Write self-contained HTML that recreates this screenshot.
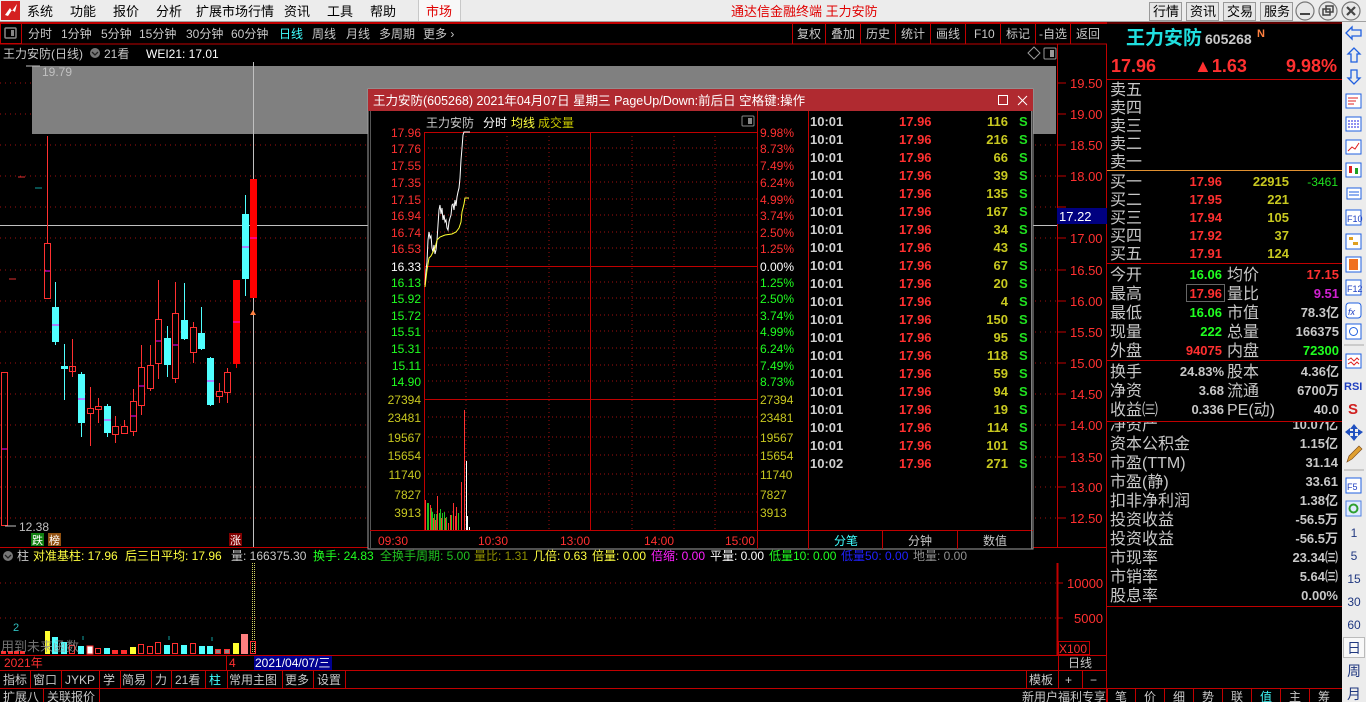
<!DOCTYPE html>
<html><head><meta charset="utf-8">
<style>
html,body{margin:0;padding:0;background:#000;width:1366px;height:702px;overflow:hidden}
svg{display:block}
text{font-family:"Liberation Sans","Noto Sans CJK SC",sans-serif;}
</style></head><body>
<svg width="1366" height="702" viewBox="0 0 1366 702" xmlns="http://www.w3.org/2000/svg">
<rect width="1366" height="702" fill="#000"/>
<!-- top menu -->
<rect x="0" y="0" width="1366" height="22" fill="#ececec"/>
<line x1="0" y1="21.5" x2="1366" y2="21.5" stroke="#a0a0a0"/>
<rect x="1" y="1" width="19" height="19" fill="#d42020"/>
<path d="M5 15 L10 8 L12 11 L17 4 L15 12 L12 10 L8 16Z" fill="#fff"/>
<g font-size="13" fill="#000">
<text x="27" y="16">系统</text><text x="70" y="16">功能</text><text x="113" y="16">报价</text><text x="156" y="16">分析</text><text x="196" y="16">扩展市场行情</text><text x="284" y="16">资讯</text><text x="327" y="16">工具</text><text x="370" y="16">帮助</text>
</g>
<rect x="418" y="0" width="42" height="21" fill="#f8f8f8"/>
<line x1="418.5" y1="0" x2="418.5" y2="21" stroke="#c8c8c8"/>
<line x1="460.5" y1="0" x2="460.5" y2="21" stroke="#c8c8c8"/>
<text x="426" y="16" font-size="13" fill="#e00000">市场</text>
<text x="731" y="16" font-size="13" fill="#e00000">通达信金融终端  王力安防</text>
<g font-size="13" fill="#000">
<rect x="1149.5" y="2.5" width="32" height="18" fill="#e6e6e6" stroke="#999"/><text x="1153" y="16">行情</text>
<rect x="1186.5" y="2.5" width="32" height="18" fill="#e6e6e6" stroke="#999"/><text x="1190" y="16">资讯</text>
<rect x="1223.5" y="2.5" width="32" height="18" fill="#e6e6e6" stroke="#999"/><text x="1227" y="16">交易</text>
<rect x="1260.5" y="2.5" width="32" height="18" fill="#e6e6e6" stroke="#999"/><text x="1264" y="16">服务</text>
</g>
<g stroke="#777" fill="#e8e8e8" stroke-width="1.2">
<circle cx="1305" cy="11" r="9"/><circle cx="1328" cy="11" r="9"/><circle cx="1351" cy="11" r="9"/>
</g>
<line x1="1300" y1="14" x2="1310" y2="14" stroke="#444" stroke-width="2"/>
<rect x="1323" y="9" width="7" height="6" fill="none" stroke="#444" stroke-width="1.5"/><rect x="1326" y="6" width="7" height="6" fill="none" stroke="#444" stroke-width="1.5"/>
<path d="M1347 7 L1355 15 M1355 7 L1347 15" stroke="#444" stroke-width="2.2"/>

<!-- second bar -->
<line x1="0" y1="23" x2="1107" y2="23" stroke="#c00000" stroke-width="2"/>
<line x1="0" y1="44" x2="1107" y2="44" stroke="#c00000" stroke-width="1"/>
<rect x="0.5" y="23.5" width="21" height="20" fill="none" stroke="#c00000"/>
<rect x="5" y="28" width="11" height="10" fill="none" stroke="#888" stroke-width="1.5" rx="1"/><rect x="11" y="30" width="3" height="6" fill="#888"/>
<g font-size="12" fill="#c8c8c8">
<text x="28" y="38">分时</text><text x="61" y="38">1分钟</text><text x="101" y="38">5分钟</text><text x="139" y="38">15分钟</text><text x="186" y="38">30分钟</text><text x="231" y="38">60分钟</text><text x="279" y="38" fill="#40ffff">日线</text><text x="312" y="38">周线</text><text x="346" y="38">月线</text><text x="379" y="38">多周期</text><text x="423" y="38">更多 ›</text>
</g>
<g stroke="#c00000"><line x1="792.5" y1="23" x2="792.5" y2="44"/><line x1="825.5" y1="23" x2="825.5" y2="44"/><line x1="860.5" y1="23" x2="860.5" y2="44"/><line x1="895.5" y1="23" x2="895.5" y2="44"/><line x1="930.5" y1="23" x2="930.5" y2="44"/><line x1="965.5" y1="23" x2="965.5" y2="44"/><line x1="1000.5" y1="23" x2="1000.5" y2="44"/><line x1="1035.5" y1="23" x2="1035.5" y2="44"/><line x1="1070.5" y1="23" x2="1070.5" y2="44"/></g>
<g font-size="12" fill="#c8c8c8">
<text x="797" y="38">复权</text><text x="831" y="38">叠加</text><text x="866" y="38">历史</text><text x="901" y="38">统计</text><text x="936" y="38">画线</text><text x="974" y="38">F10</text><text x="1006" y="38">标记</text><text x="1039" y="38">-自选</text><text x="1076" y="38">返回</text>
</g>

<!-- chart title -->
<text x="3" y="58" font-size="12" fill="#c8c8c8">王力安防(日线)</text>
<circle cx="95" cy="53" r="5" fill="#777"/><path d="M92 52 L95 55 L98 52" stroke="#222" fill="none" stroke-width="1.3"/>
<text x="104" y="58" font-size="12" fill="#c8c8c8">21看</text>
<text x="146" y="58" font-size="12" fill="#fff">WEI21: 17.01</text>
<path d="M1028 53 L1034 47 L1040 53 L1034 59Z" fill="none" stroke="#999"/>
<rect x="1044" y="48" width="12" height="11" fill="none" stroke="#999" rx="1"/><rect x="1050" y="50" width="4" height="7" fill="#999"/>

<!-- price axis -->
<line x1="1057.5" y1="44" x2="1057.5" y2="547" stroke="#c00000"/>
<line x1="1106.5" y1="44" x2="1106.5" y2="702" stroke="#c00000"/>
<g stroke="#c00000">
<line x1="1058" y1="83" x2="1066" y2="83"/><line x1="1058" y1="114" x2="1066" y2="114"/><line x1="1058" y1="145" x2="1066" y2="145"/><line x1="1058" y1="176" x2="1066" y2="176"/><line x1="1058" y1="207" x2="1066" y2="207"/><line x1="1058" y1="238" x2="1066" y2="238"/><line x1="1058" y1="270" x2="1066" y2="270"/><line x1="1058" y1="301" x2="1066" y2="301"/><line x1="1058" y1="332" x2="1066" y2="332"/><line x1="1058" y1="363" x2="1066" y2="363"/><line x1="1058" y1="394" x2="1066" y2="394"/><line x1="1058" y1="425" x2="1066" y2="425"/><line x1="1058" y1="457" x2="1066" y2="457"/><line x1="1058" y1="487" x2="1066" y2="487"/><line x1="1058" y1="518" x2="1066" y2="518"/>
</g>
<g font-size="13" fill="#ff3030">
<text x="1070" y="88">19.50</text><text x="1070" y="119">19.00</text><text x="1070" y="150">18.50</text><text x="1070" y="181">18.00</text><text x="1070" y="243">17.00</text><text x="1070" y="275">16.50</text><text x="1070" y="306">16.00</text><text x="1070" y="337">15.50</text><text x="1070" y="368">15.00</text><text x="1070" y="399">14.50</text><text x="1070" y="430">14.00</text><text x="1070" y="462">13.50</text><text x="1070" y="492">13.00</text><text x="1070" y="523">12.50</text>
</g>
<rect x="1057" y="208" width="50" height="16" fill="#000080"/>
<text x="1059" y="221" font-size="13" fill="#fff">17.22</text>

<!-- grid dotted -->
<g stroke="#a01010" stroke-dasharray="1,4">
<line x1="0" y1="83" x2="1056" y2="83"/><line x1="0" y1="114" x2="1056" y2="114"/><line x1="0" y1="145" x2="1056" y2="145"/><line x1="0" y1="176" x2="1056" y2="176"/><line x1="0" y1="207" x2="1056" y2="207"/><line x1="0" y1="238" x2="1056" y2="238"/><line x1="0" y1="270" x2="1056" y2="270"/><line x1="0" y1="301" x2="1056" y2="301"/><line x1="0" y1="332" x2="1056" y2="332"/><line x1="0" y1="363" x2="1056" y2="363"/><line x1="0" y1="394" x2="1056" y2="394"/><line x1="0" y1="425" x2="1056" y2="425"/><line x1="0" y1="457" x2="1056" y2="457"/><line x1="0" y1="487" x2="1056" y2="487"/><line x1="0" y1="518" x2="1056" y2="518"/>
</g>
<rect x="32" y="66" width="1024" height="68" fill="#808080"/>
<text x="42" y="76" font-size="12" fill="#c0c0c0">19.79</text>
<line x1="26" y1="66" x2="40" y2="66" stroke="#c0c0c0"/>
<!-- crosshair -->
<line x1="253.5" y1="62" x2="253.5" y2="547" stroke="#c0c0c0"/>
<line x1="0" y1="225.5" x2="1057" y2="225.5" stroke="#c0c0c0"/>
<!-- small marks -->
<line x1="18" y1="177" x2="25" y2="177" stroke="#e03030"/><line x1="35" y1="188" x2="42" y2="188" stroke="#10a0a0"/><line x1="9" y1="279" x2="16" y2="279" stroke="#e03030"/>
<!-- candles -->
<g stroke-width="1">
<rect x="1.5" y="372.5" width="6" height="153" fill="none" stroke="#ff3030"/>
<line x1="2" y1="449" x2="7" y2="449" stroke="#ff00ff"/>
<line x1="47.5" y1="136" x2="47.5" y2="243" stroke="#ff3030"/><rect x="44.5" y="243.5" width="6" height="55" fill="none" stroke="#ff3030"/>
<line x1="55.5" y1="282" x2="55.5" y2="345" stroke="#50ffff"/><rect x="52" y="307" width="7" height="35" fill="#50ffff"/>
<line x1="64.5" y1="344" x2="64.5" y2="400" stroke="#50ffff"/><rect x="61" y="366" width="7" height="3" fill="#50ffff"/>
<line x1="72.5" y1="339" x2="72.5" y2="377" stroke="#ff3030"/><rect x="69.5" y="366.5" width="6" height="5" fill="none" stroke="#ff3030"/>
<line x1="81.5" y1="372" x2="81.5" y2="437" stroke="#50ffff"/><rect x="78" y="374" width="7" height="49" fill="#50ffff"/>
<line x1="90.5" y1="387" x2="90.5" y2="446" stroke="#ff3030"/><rect x="87.5" y="408.5" width="6" height="5" fill="#000" stroke="#ff3030"/>
<line x1="98.5" y1="398" x2="98.5" y2="423" stroke="#ff3030"/><rect x="95.5" y="406.5" width="6" height="3" fill="#000" stroke="#ff3030"/>
<line x1="107.5" y1="404" x2="107.5" y2="437" stroke="#50ffff"/><rect x="104" y="406" width="7" height="27" fill="#50ffff"/>
<line x1="115.5" y1="416" x2="115.5" y2="443" stroke="#ff3030"/><rect x="112.5" y="426.5" width="6" height="8" fill="#000" stroke="#ff3030"/>
<line x1="124.5" y1="420" x2="124.5" y2="433" stroke="#ff3030"/><rect x="121.5" y="426.5" width="6" height="7" fill="#000" stroke="#ff3030"/>
<line x1="133.5" y1="389" x2="133.5" y2="436" stroke="#ff3030"/><rect x="130.5" y="401.5" width="6" height="30" fill="#000" stroke="#ff3030"/>
<line x1="141.5" y1="345" x2="141.5" y2="415" stroke="#ff3030"/><rect x="138.5" y="367.5" width="6" height="38" fill="#000" stroke="#ff3030"/>
<line x1="150.5" y1="345" x2="150.5" y2="391" stroke="#ff3030"/><rect x="147.5" y="365.5" width="6" height="23" fill="#000" stroke="#ff3030"/>
<line x1="158.5" y1="280" x2="158.5" y2="379" stroke="#ff3030"/><rect x="155.5" y="319.5" width="6" height="44" fill="#000" stroke="#ff3030"/>
<line x1="167.5" y1="326" x2="167.5" y2="377" stroke="#50ffff"/><rect x="164" y="338" width="7" height="27" fill="#50ffff"/>
<line x1="175.5" y1="282" x2="175.5" y2="383" stroke="#ff3030"/><rect x="172.5" y="313.5" width="6" height="65" fill="#000" stroke="#ff3030"/>
<line x1="184.5" y1="283" x2="184.5" y2="340" stroke="#50ffff"/><rect x="181" y="320" width="7" height="19" fill="#50ffff"/>
<line x1="193.5" y1="322" x2="193.5" y2="363" stroke="#ff3030"/><rect x="190.5" y="327.5" width="6" height="25" fill="#000" stroke="#ff3030"/>
<line x1="201.5" y1="307" x2="201.5" y2="350" stroke="#50ffff"/><rect x="198" y="333" width="7" height="16" fill="#50ffff"/>
<line x1="210.5" y1="357" x2="210.5" y2="406" stroke="#50ffff"/><rect x="207" y="358" width="7" height="47" fill="#50ffff"/>
<line x1="219.5" y1="383" x2="219.5" y2="403" stroke="#ff3030"/><rect x="216.5" y="391.5" width="6" height="5" fill="#000" stroke="#ff3030"/>
<line x1="227.5" y1="368" x2="227.5" y2="403" stroke="#ff3030"/><rect x="224.5" y="372.5" width="6" height="20" fill="#000" stroke="#ff3030"/>
<line x1="236.5" y1="280" x2="236.5" y2="368" stroke="#ff0000"/><rect x="233" y="280" width="7" height="84" fill="#ff0000"/>
<line x1="245.5" y1="195" x2="245.5" y2="296" stroke="#50ffff"/><rect x="242" y="214" width="7" height="65" fill="#50ffff"/>
<rect x="250" y="179" width="7" height="119" fill="#ff0000"/>
</g>
<g stroke="#ff00ff"><line x1="45" y1="271" x2="50" y2="271"/><line x1="52" y1="325" x2="59" y2="325"/><line x1="78" y1="399" x2="85" y2="399"/><line x1="104" y1="420" x2="111" y2="420"/><line x1="131" y1="416" x2="136" y2="416"/><line x1="139" y1="386" x2="144" y2="386"/><line x1="156" y1="341" x2="161" y2="341"/><line x1="173" y1="345" x2="178" y2="345"/><line x1="207" y1="381" x2="214" y2="381"/><line x1="233" y1="322" x2="240" y2="322"/><line x1="242" y1="247" x2="249" y2="247"/><line x1="250" y1="238" x2="257" y2="238"/></g>
<path d="M250 315 L253 310 L256 315Z" fill="#ff8040"/>
<text x="19" y="531" font-size="12" fill="#c0c0c0">12.38</text>
<line x1="5" y1="526" x2="16" y2="526" stroke="#c0c0c0"/>
<rect x="31" y="533" width="13" height="13" fill="#108010"/><text x="32" y="544" font-size="11" fill="#fff">跌</text>
<rect x="48" y="533" width="13" height="13" fill="#905010"/><text x="49" y="544" font-size="11" fill="#fff">榜</text>
<rect x="229" y="533" width="13" height="13" fill="#800000"/><text x="230" y="544" font-size="11" fill="#fff">涨</text>
<line x1="0" y1="547.5" x2="1107" y2="547.5" stroke="#c00000"/>

<!-- indicator line -->
<circle cx="8" cy="556" r="5" fill="#777"/><path d="M5 555 L8 558 L11 555" stroke="#222" fill="none" stroke-width="1.3"/>
<g font-size="12">
<text x="17" y="560" fill="#c8c8c8">柱</text>
<text x="33" y="560" fill="#ffff40">对准基柱: 17.96</text>
<text x="125" y="560" fill="#ffff40">后三日平均: 17.96</text>
<text x="231" y="560" fill="#c8c8c8">量: 166375.30</text>
<text x="313" y="560" fill="#20ff20">换手: 24.83</text>
<text x="380" y="560" fill="#20c020">全换手周期: 5.00</text>
<text x="474" y="560" fill="#909000">量比: 1.31</text>
<text x="533" y="560" fill="#ffff40">几倍: 0.63</text>
<text x="592" y="560" fill="#ffff40">倍量: 0.00</text>
<text x="651" y="560" fill="#ff20ff">倍缩: 0.00</text>
<text x="710" y="560" fill="#fff">平量: 0.00</text>
<text x="769" y="560" fill="#20ff20">低量10: 0.00</text>
<text x="841" y="560" fill="#2020ff">低量50: 0.00</text>
<text x="913" y="560" fill="#909090">地量: 0.00</text>
</g>
<!-- volume panel -->
<g stroke="#a01010" stroke-dasharray="1,4"><line x1="0" y1="583" x2="1056" y2="583"/><line x1="0" y1="618" x2="1056" y2="618"/></g>
<line x1="1057.5" y1="563" x2="1057.5" y2="655" stroke="#c00000" stroke-width="2"/>
<line x1="1058" y1="583" x2="1063" y2="583" stroke="#c00000"/><line x1="1058" y1="618" x2="1063" y2="618" stroke="#c00000"/>
<text x="1067" y="588" font-size="13" fill="#ff3030">10000</text>
<text x="1074" y="623" font-size="13" fill="#ff3030">5000</text>
<rect x="1058.5" y="641.5" width="31" height="13" fill="none" stroke="#c00000"/>
<text x="1059" y="653" font-size="12" fill="#ff3030">X100</text>
<line x1="252.5" y1="563" x2="252.5" y2="655" stroke="#d0d060" stroke-dasharray="1,1"/>
<line x1="254.5" y1="563" x2="254.5" y2="655" stroke="#d0d060" stroke-dasharray="1,1"/>
<g>
<rect x="1" y="651" width="5" height="3" fill="#ff3030"/><rect x="8" y="651" width="5" height="3" fill="#ff3030"/><rect x="14" y="651" width="5" height="3" fill="#ff3030"/><rect x="20" y="651" width="5" height="3" fill="#ff3030"/>
<rect x="45" y="631" width="5" height="23" fill="#ffff30"/>
<rect x="52" y="637" width="6" height="17" fill="#50ffff"/>
<rect x="61" y="642" width="6" height="12" fill="#50ffff"/>
<rect x="69.5" y="645.5" width="5" height="8" fill="none" stroke="#ff3030"/>
<rect x="78" y="646" width="6" height="8" fill="#50ffff"/>
<rect x="87" y="646" width="6" height="8" fill="#fff" stroke="#ff3030"/>
<rect x="95.5" y="648.5" width="5" height="5" fill="none" stroke="#ff3030"/>
<rect x="104" y="648" width="6" height="6" fill="#50ffff"/>
<rect x="112" y="650" width="6" height="4" fill="#ff3030"/>
<rect x="121" y="650" width="6" height="4" fill="#ff3030"/>
<rect x="130" y="647" width="6" height="7" fill="#ffff30"/>
<rect x="138.5" y="644.5" width="5" height="9" fill="none" stroke="#ff3030"/>
<rect x="147.5" y="646.5" width="5" height="7" fill="none" stroke="#ff3030"/>
<rect x="155.5" y="642.5" width="5" height="11" fill="none" stroke="#ff3030"/>
<rect x="164" y="645" width="6" height="9" fill="#50ffff"/>
<rect x="172.5" y="643.5" width="5" height="10" fill="none" stroke="#ff3030"/>
<rect x="181" y="645" width="6" height="9" fill="#50ffff"/>
<rect x="190.5" y="643.5" width="5" height="10" fill="none" stroke="#ff3030"/>
<rect x="199" y="646" width="6" height="8" fill="#50ffff"/>
<rect x="207" y="646" width="6" height="8" fill="#50ffff"/>
<rect x="215.5" y="649.5" width="5" height="4" fill="#888" stroke="#ff3030"/>
<rect x="224.5" y="649.5" width="5" height="4" fill="#888" stroke="#ff3030"/>
<rect x="233" y="643" width="6" height="11" fill="#ffff30"/>
<rect x="241" y="634" width="7" height="20" fill="#ff8080"/>
<rect x="250.5" y="641.5" width="5" height="12" fill="none" stroke="#ff3030"/>
</g>
<g stroke="#10a0a0"><line x1="83" y1="636" x2="83" y2="640"/><line x1="169" y1="636" x2="169" y2="640"/><line x1="212" y1="637" x2="212" y2="641"/></g>
<text x="13" y="631" font-size="11" fill="#30c0c0">2</text>
<text x="1" y="651" font-size="13" fill="#909090" opacity="0.8">用到未来函数</text>
<line x1="0" y1="655.5" x2="1107" y2="655.5" stroke="#c00000"/>
<!-- date bar -->
<text x="4" y="667" font-size="12" fill="#ff3030">2021年</text>
<line x1="226.5" y1="656" x2="226.5" y2="670" stroke="#c00000"/>
<text x="229" y="667" font-size="12" fill="#ff3030">4</text>
<rect x="254" y="656" width="78" height="14" fill="#000090"/>
<text x="255" y="667" font-size="12" fill="#fff">2021/04/07/三</text>
<rect x="1058.5" y="655.5" width="48" height="15" fill="none" stroke="#c00000"/>
<text x="1068" y="667" font-size="12" fill="#c8c8c8">日线</text>
<line x1="0" y1="670.5" x2="1107" y2="670.5" stroke="#c00000"/>
<!-- tab bar -->
<g stroke="#c00000"><line x1="30.5" y1="671" x2="30.5" y2="688"/><line x1="61.5" y1="671" x2="61.5" y2="688"/><line x1="99.5" y1="671" x2="99.5" y2="688"/><line x1="120.5" y1="671" x2="120.5" y2="688"/><line x1="151.5" y1="671" x2="151.5" y2="688"/><line x1="171.5" y1="671" x2="171.5" y2="688"/><line x1="205.5" y1="671" x2="205.5" y2="688"/><line x1="227.5" y1="671" x2="227.5" y2="688"/><line x1="282.5" y1="671" x2="282.5" y2="688"/><line x1="313.5" y1="671" x2="313.5" y2="688"/><line x1="345.5" y1="671" x2="345.5" y2="688"/>
<line x1="1026.5" y1="671" x2="1026.5" y2="688"/><line x1="1058.5" y1="671" x2="1058.5" y2="688"/><line x1="1082.5" y1="671" x2="1082.5" y2="688"/>
<line x1="0" y1="688.5" x2="1366" y2="688.5"/>
<line x1="43.5" y1="689" x2="43.5" y2="702"/><line x1="99.5" y1="689" x2="99.5" y2="702"/>
</g>
<g font-size="12" fill="#c8c8c8">
<text x="3" y="684">指标</text><text x="33" y="684">窗口</text><text x="65" y="684">JYKP</text><text x="103" y="684">学</text><text x="122" y="684">简易</text><text x="155" y="684">力</text><text x="175" y="684">21看</text><text x="209" y="684" fill="#40ffff">柱</text><text x="229" y="684">常用主图</text><text x="285" y="684">更多</text><text x="317" y="684">设置</text>
<text x="1029" y="684">模板</text><text x="1065" y="684">+</text><text x="1090" y="684">−</text>
<text x="3" y="701">扩展八</text><text x="47" y="701">关联报价</text>
<text x="1022" y="701">新用户福利专享</text>
</g>
<g stroke="#c00000"><line x1="1107.5" y1="689" x2="1107.5" y2="702"/><line x1="1135.5" y1="689" x2="1135.5" y2="702"/><line x1="1164.5" y1="689" x2="1164.5" y2="702"/><line x1="1193.5" y1="689" x2="1193.5" y2="702"/><line x1="1222.5" y1="689" x2="1222.5" y2="702"/><line x1="1251.5" y1="689" x2="1251.5" y2="702"/><line x1="1280.5" y1="689" x2="1280.5" y2="702"/><line x1="1309.5" y1="689" x2="1309.5" y2="702"/></g>
<g font-size="12" fill="#c8c8c8"><text x="1115" y="701">笔</text><text x="1144" y="701">价</text><text x="1173" y="701">细</text><text x="1202" y="701">势</text><text x="1231" y="701">联</text><text x="1260" y="701" fill="#40ffff">值</text><text x="1289" y="701">主</text><text x="1318" y="701">筹</text></g>

<!-- popup -->
<rect x="368" y="89" width="665" height="460" fill="#000" stroke="#a0a0a0"/>
<rect x="368" y="89" width="665" height="22" fill="#b02a30"/>
<text x="373" y="105" font-size="12.5" fill="#fff">王力安防(605268) 2021年04月07日 星期三 PageUp/Down:前后日 空格键:操作</text>
<rect x="998.5" y="95.5" width="9" height="9" fill="none" stroke="#fff"/>
<path d="M1018 96 L1027 105 M1027 96 L1018 105" stroke="#fff"/>
<text x="426" y="127" font-size="12" fill="#c8c8c8">王力安防</text>
<text x="483" y="127" font-size="12" fill="#fff">分时</text>
<text x="511" y="127" font-size="12" fill="#ffff40">均线</text>
<text x="538" y="127" font-size="12" fill="#c8c800">成交量</text>
<rect x="742" y="116" width="12" height="10" fill="none" stroke="#888" rx="1"/><rect x="748" y="118" width="4" height="6" fill="#888"/>
<line x1="370.5" y1="111" x2="370.5" y2="549" stroke="#555"/>
<!-- popup grid -->
<g stroke="#a01010" stroke-dasharray="1,3">
<line x1="424" y1="148" x2="757" y2="148"/><line x1="424" y1="165" x2="757" y2="165"/><line x1="424" y1="182" x2="757" y2="182"/><line x1="424" y1="199" x2="757" y2="199"/><line x1="424" y1="215" x2="757" y2="215"/><line x1="424" y1="232" x2="757" y2="232"/><line x1="424" y1="248" x2="757" y2="248"/><line x1="424" y1="282" x2="757" y2="282"/><line x1="424" y1="298" x2="757" y2="298"/><line x1="424" y1="315" x2="757" y2="315"/><line x1="424" y1="331" x2="757" y2="331"/><line x1="424" y1="348" x2="757" y2="348"/><line x1="424" y1="365" x2="757" y2="365"/><line x1="424" y1="381" x2="757" y2="381"/>
<line x1="424" y1="417" x2="757" y2="417"/><line x1="424" y1="437" x2="757" y2="437"/><line x1="424" y1="455" x2="757" y2="455"/><line x1="424" y1="474" x2="757" y2="474"/><line x1="424" y1="494" x2="757" y2="494"/><line x1="424" y1="512" x2="757" y2="512"/>
<line x1="466" y1="132" x2="466" y2="530"/><line x1="507" y1="132" x2="507" y2="530"/><line x1="549" y1="132" x2="549" y2="530"/><line x1="632" y1="132" x2="632" y2="530"/><line x1="674" y1="132" x2="674" y2="530"/><line x1="715" y1="132" x2="715" y2="530"/>
</g>
<g stroke="#c00000">
<line x1="424.5" y1="132" x2="424.5" y2="530"/><line x1="757.5" y1="111" x2="757.5" y2="549"/><line x1="590.5" y1="132" x2="590.5" y2="530"/>
<line x1="424" y1="132.5" x2="757" y2="132.5"/><line x1="424" y1="266.5" x2="757" y2="266.5"/><line x1="424" y1="399.5" x2="757" y2="399.5"/><line x1="370" y1="530.5" x2="1033" y2="530.5"/>
<line x1="808.5" y1="111" x2="808.5" y2="549"/><line x1="882.5" y1="531" x2="882.5" y2="549"/><line x1="957.5" y1="531" x2="957.5" y2="549"/>
</g>
<line x1="1031.5" y1="111" x2="1031.5" y2="549" stroke="#808080"/>
<g font-size="12" text-anchor="end">
<text x="421" y="137" fill="#ff3030">17.96</text><text x="421" y="153" fill="#ff3030">17.76</text><text x="421" y="170" fill="#ff3030">17.55</text><text x="421" y="187" fill="#ff3030">17.35</text><text x="421" y="204" fill="#ff3030">17.15</text><text x="421" y="220" fill="#ff3030">16.94</text><text x="421" y="237" fill="#ff3030">16.74</text><text x="421" y="253" fill="#ff3030">16.53</text><text x="421" y="271" fill="#fff">16.33</text><text x="421" y="287" fill="#20ff20">16.13</text><text x="421" y="303" fill="#20ff20">15.92</text><text x="421" y="320" fill="#20ff20">15.72</text><text x="421" y="336" fill="#20ff20">15.51</text><text x="421" y="353" fill="#20ff20">15.31</text><text x="421" y="370" fill="#20ff20">15.11</text><text x="421" y="386" fill="#20ff20">14.90</text>
<text x="421" y="404" fill="#c8c820">27394</text><text x="421" y="422" fill="#c8c820">23481</text><text x="421" y="442" fill="#c8c820">19567</text><text x="421" y="460" fill="#c8c820">15654</text><text x="421" y="479" fill="#c8c820">11740</text><text x="421" y="499" fill="#c8c820">7827</text><text x="421" y="517" fill="#c8c820">3913</text>
</g>
<g font-size="12">
<text x="760" y="137" fill="#ff3030">9.98%</text><text x="760" y="153" fill="#ff3030">8.73%</text><text x="760" y="170" fill="#ff3030">7.49%</text><text x="760" y="187" fill="#ff3030">6.24%</text><text x="760" y="204" fill="#ff3030">4.99%</text><text x="760" y="220" fill="#ff3030">3.74%</text><text x="760" y="237" fill="#ff3030">2.50%</text><text x="760" y="253" fill="#ff3030">1.25%</text><text x="760" y="271" fill="#fff">0.00%</text><text x="760" y="287" fill="#20ff20">1.25%</text><text x="760" y="303" fill="#20ff20">2.50%</text><text x="760" y="320" fill="#20ff20">3.74%</text><text x="760" y="336" fill="#20ff20">4.99%</text><text x="760" y="353" fill="#20ff20">6.24%</text><text x="760" y="370" fill="#20ff20">7.49%</text><text x="760" y="386" fill="#20ff20">8.73%</text>
<text x="760" y="404" fill="#c8c820">27394</text><text x="760" y="422" fill="#c8c820">23481</text><text x="760" y="442" fill="#c8c820">19567</text><text x="760" y="460" fill="#c8c820">15654</text><text x="760" y="479" fill="#c8c820">11740</text><text x="760" y="499" fill="#c8c820">7827</text><text x="760" y="517" fill="#c8c820">3913</text>
<text x="378" y="545" fill="#ff3030">09:30</text><text x="478" y="545" fill="#ff3030">10:30</text><text x="560" y="545" fill="#ff3030">13:00</text><text x="644" y="545" fill="#ff3030">14:00</text><text x="725" y="545" fill="#ff3030">15:00</text>
<text x="834" y="545" fill="#40ffff">分笔</text><text x="908" y="545" fill="#c8c8c8">分钟</text><text x="983" y="545" fill="#c8c8c8">数值</text>
</g>
<polyline points="425,285 426,270 427,262 428,240 429,232 430,238 431,236 432,248 433,252 434,245 435,254 436,250 437,240 438,225 439,210 440,205 441,214 442,208 443,220 444,215 445,222 446,220 447,228 448,230 449,222 450,218 451,215 452,205 453,204 454,210 455,200 456,206 457,197 458,192 459,188 460,178 461,160 462,148 463,135 464,132 470,132" fill="none" stroke="#fff"/>
<polyline points="425,287 427,270 429,258 431,256 433,252 435,248 437,240 440,237 445,235 452,234 456,232 459,228 461,222 462,212 464,204 465,198 469,198" fill="none" stroke="#ffff30"/>
<g>
<rect x="425" y="500" width="1" height="30" fill="#ff3030"/><rect x="427" y="503" width="1" height="27" fill="#20c020"/><rect x="428" y="503" width="1" height="27" fill="#20c020"/><rect x="430" y="505" width="1" height="25" fill="#ff3030"/><rect x="431" y="508" width="1" height="22" fill="#20c020"/><rect x="432" y="512" width="1" height="18" fill="#20c020"/><rect x="433" y="518" width="1" height="12" fill="#ff3030"/><rect x="434" y="514" width="1" height="16" fill="#20c020"/><rect x="435" y="520" width="1" height="10" fill="#ff3030"/><rect x="436" y="514" width="1" height="16" fill="#20c020"/><rect x="437" y="496" width="1" height="34" fill="#ff3030"/><rect x="439" y="513" width="1" height="17" fill="#20c020"/><rect x="440" y="509" width="1" height="21" fill="#20c020"/><rect x="441" y="518" width="1" height="12" fill="#ff3030"/><rect x="442" y="513" width="1" height="17" fill="#20c020"/><rect x="444" y="512" width="1" height="18" fill="#20c020"/><rect x="445" y="518" width="1" height="12" fill="#ff3030"/><rect x="446" y="517" width="1" height="13" fill="#20c020"/><rect x="448" y="523" width="1" height="7" fill="#ff3030"/><rect x="450" y="515" width="1" height="15" fill="#ff3030"/><rect x="451" y="515" width="1" height="15" fill="#20c020"/><rect x="453" y="503" width="1" height="27" fill="#ff3030"/><rect x="455" y="516" width="1" height="14" fill="#ff3030"/><rect x="456" y="507" width="1" height="23" fill="#ff3030"/><rect x="458" y="513" width="1" height="17" fill="#20c020"/><rect x="461" y="482" width="1" height="48" fill="#ff3030"/><rect x="464" y="410" width="1" height="120" fill="#ff3030"/><rect x="466" y="461" width="1" height="69" fill="#fff"/><rect x="467" y="516" width="1" height="14" fill="#fff"/><rect x="469" y="527" width="1" height="3" fill="#fff"/>
</g>
<!-- ticks -->
<g font-size="13" font-weight="bold">
<g fill="#d0d0d0"><text x="810" y="126">10:01</text><text x="810" y="144">10:01</text><text x="810" y="162">10:01</text><text x="810" y="180">10:01</text><text x="810" y="198">10:01</text><text x="810" y="216">10:01</text><text x="810" y="234">10:01</text><text x="810" y="252">10:01</text><text x="810" y="270">10:01</text><text x="810" y="288">10:01</text><text x="810" y="306">10:01</text><text x="810" y="324">10:01</text><text x="810" y="342">10:01</text><text x="810" y="360">10:01</text><text x="810" y="378">10:01</text><text x="810" y="396">10:01</text><text x="810" y="414">10:01</text><text x="810" y="432">10:01</text><text x="810" y="450">10:01</text><text x="810" y="468">10:02</text></g>
<g fill="#ff3030"><text x="899" y="126">17.96</text><text x="899" y="144">17.96</text><text x="899" y="162">17.96</text><text x="899" y="180">17.96</text><text x="899" y="198">17.96</text><text x="899" y="216">17.96</text><text x="899" y="234">17.96</text><text x="899" y="252">17.96</text><text x="899" y="270">17.96</text><text x="899" y="288">17.96</text><text x="899" y="306">17.96</text><text x="899" y="324">17.96</text><text x="899" y="342">17.96</text><text x="899" y="360">17.96</text><text x="899" y="378">17.96</text><text x="899" y="396">17.96</text><text x="899" y="414">17.96</text><text x="899" y="432">17.96</text><text x="899" y="450">17.96</text><text x="899" y="468">17.96</text></g>
<g fill="#c8c820" text-anchor="end"><text x="1008" y="126">116</text><text x="1008" y="144">216</text><text x="1008" y="162">66</text><text x="1008" y="180">39</text><text x="1008" y="198">135</text><text x="1008" y="216">167</text><text x="1008" y="234">34</text><text x="1008" y="252">43</text><text x="1008" y="270">67</text><text x="1008" y="288">20</text><text x="1008" y="306">4</text><text x="1008" y="324">150</text><text x="1008" y="342">95</text><text x="1008" y="360">118</text><text x="1008" y="378">59</text><text x="1008" y="396">94</text><text x="1008" y="414">19</text><text x="1008" y="432">114</text><text x="1008" y="450">101</text><text x="1008" y="468">271</text></g>
<g fill="#20e020"><text x="1019" y="126">S</text><text x="1019" y="144">S</text><text x="1019" y="162">S</text><text x="1019" y="180">S</text><text x="1019" y="198">S</text><text x="1019" y="216">S</text><text x="1019" y="234">S</text><text x="1019" y="252">S</text><text x="1019" y="270">S</text><text x="1019" y="288">S</text><text x="1019" y="306">S</text><text x="1019" y="324">S</text><text x="1019" y="342">S</text><text x="1019" y="360">S</text><text x="1019" y="378">S</text><text x="1019" y="396">S</text><text x="1019" y="414">S</text><text x="1019" y="432">S</text><text x="1019" y="450">S</text><text x="1019" y="468">S</text></g>
</g>

<!-- right panel -->
<line x1="1107" y1="23" x2="1342" y2="23" stroke="#c00000"/>
<text x="1126" y="44" font-size="19" font-weight="bold" fill="#20e0e0">王力安防</text>
<text x="1205" y="44" font-size="14" font-weight="bold" fill="#c8c8c8">605268</text>
<text x="1257" y="37" font-size="11" font-weight="bold" fill="#ff8040">N</text>
<g font-size="18" font-weight="bold" fill="#ff3030">
<text x="1111" y="72">17.96</text><text x="1194" y="72">▲1.63</text><text x="1337" y="72" text-anchor="end">9.98%</text>
</g>
<line x1="1107" y1="79.5" x2="1342" y2="79.5" stroke="#c00000"/>
<g font-size="16" fill="#c8c8c8">
<text x="1110" y="95">卖五</text><text x="1110" y="113">卖四</text><text x="1110" y="131">卖三</text><text x="1110" y="149">卖二</text><text x="1110" y="167">卖一</text>
</g>
<line x1="1107" y1="170.5" x2="1342" y2="170.5" stroke="#e09030"/>
<g font-size="16" fill="#c8c8c8">
<text x="1110" y="187">买一</text><text x="1110" y="205">买二</text><text x="1110" y="223">买三</text><text x="1110" y="241">买四</text><text x="1110" y="259">买五</text>
</g>
<g font-size="13" font-weight="bold">
<g fill="#ff3030" text-anchor="end"><text x="1222" y="186">17.96</text><text x="1222" y="204">17.95</text><text x="1222" y="222">17.94</text><text x="1222" y="240">17.92</text><text x="1222" y="258">17.91</text></g>
<g fill="#c8c820" text-anchor="end"><text x="1289" y="186">22915</text><text x="1289" y="204">221</text><text x="1289" y="222">105</text><text x="1289" y="240">37</text><text x="1289" y="258">124</text></g>
</g>
<text x="1338" y="186" font-size="12" fill="#20e020" text-anchor="end">-3461</text>
<line x1="1107" y1="263.5" x2="1342" y2="263.5" stroke="#c00000"/>
<g font-size="16" fill="#c8c8c8">
<text x="1110" y="280">今开</text><text x="1110" y="299">最高</text><text x="1110" y="318">最低</text><text x="1110" y="337">现量</text><text x="1110" y="356">外盘</text>
<text x="1227" y="280">均价</text><text x="1227" y="299">量比</text><text x="1227" y="318">市值</text><text x="1227" y="337">总量</text><text x="1227" y="356">内盘</text>
</g>
<rect x="1186.5" y="284.5" width="38" height="17" fill="none" stroke="#666"/>
<g font-size="13" font-weight="bold" text-anchor="end">
<text x="1222" y="279" fill="#20ff20">16.06</text><text x="1222" y="298" fill="#ff3030">17.96</text><text x="1222" y="317" fill="#20ff20">16.06</text><text x="1222" y="336" fill="#20ff20">222</text><text x="1222" y="355" fill="#ff3030">94075</text>
<text x="1339" y="279" fill="#ff3030">17.15</text><text x="1339" y="298" fill="#d020d0">9.51</text><text x="1339" y="317" fill="#c8c8c8">78.3亿</text><text x="1339" y="336" fill="#c8c8c8">166375</text><text x="1339" y="355" fill="#20ff20">72300</text>
</g>
<line x1="1107" y1="360.5" x2="1342" y2="360.5" stroke="#c00000"/>
<g font-size="16" fill="#c8c8c8">
<text x="1110" y="377">换手</text><text x="1110" y="396">净资</text><text x="1110" y="415">收益㈢</text>
<text x="1227" y="377">股本</text><text x="1227" y="396">流通</text><text x="1227" y="415">PE(动)</text>
</g>
<g font-size="13" font-weight="bold" fill="#c8c8c8" text-anchor="end">
<text x="1224" y="376">24.83%</text><text x="1224" y="395">3.68</text><text x="1224" y="414">0.336</text>
<text x="1339" y="376">4.36亿</text><text x="1339" y="395">6700万</text><text x="1339" y="414">40.0</text>
</g>
<line x1="1107" y1="421.5" x2="1342" y2="421.5" stroke="#c00000"/>
<clipPath id="cp"><rect x="1107" y="422" width="235" height="184"/></clipPath>
<g clip-path="url(#cp)">
<g font-size="16" fill="#c8c8c8">
<text x="1110" y="430">净资产</text><text x="1110" y="449">资本公积金</text><text x="1110" y="468">市盈(TTM)</text><text x="1110" y="487">市盈(静)</text><text x="1110" y="506">扣非净利润</text><text x="1110" y="525">投资收益</text><text x="1110" y="544">投资收益</text><text x="1110" y="563">市现率</text><text x="1110" y="582">市销率</text><text x="1110" y="601">股息率</text>
</g>
<g font-size="13" font-weight="bold" fill="#c8c8c8" text-anchor="end">
<text x="1338" y="429">10.07亿</text><text x="1338" y="448">1.15亿</text><text x="1338" y="467">31.14</text><text x="1338" y="486">33.61</text><text x="1338" y="505">1.38亿</text><text x="1338" y="524">-56.5万</text><text x="1338" y="543">-56.5万</text><text x="1338" y="562">23.34㈢</text><text x="1338" y="581">5.64㈢</text><text x="1338" y="600">0.00%</text>
</g>
</g>
<line x1="1107" y1="606.5" x2="1342" y2="606.5" stroke="#c00000"/>

<!-- right toolbar -->
<rect x="1342" y="22" width="24" height="680" fill="#ececec"/>
<g fill="none" stroke="#2060e0" stroke-width="1.3">
<path d="M1346 33 L1352 27 L1352 30 L1361 30 L1361 36 L1352 36 L1352 39Z"/>
<path d="M1354 48 L1348 54 L1351 54 L1351 62 L1357 62 L1357 54 L1360 54Z"/>
<path d="M1354 84 L1348 78 L1351 78 L1351 70 L1357 70 L1357 78 L1360 78Z"/>
</g>
<g>
<rect x="1346" y="94" width="15" height="14" fill="#fff" stroke="#2060e0"/><path d="M1348 98 H1358 M1348 101 H1356 M1348 104 H1354" stroke="#e02020"/>
<rect x="1346" y="117" width="15" height="14" fill="#fff" stroke="#2060e0"/><path d="M1348 121 H1359 M1348 124 H1359 M1348 127 H1359" stroke="#2020e0" stroke-dasharray="2,1"/>
<rect x="1346" y="140" width="15" height="14" fill="#fff" stroke="#2060e0"/><path d="M1348 151 L1352 147 L1355 149 L1359 143" stroke="#e02020" fill="none"/>
<rect x="1346" y="163" width="15" height="14" fill="#fff" stroke="#2060e0"/><rect x="1349" y="166" width="3" height="7" fill="#e02020"/><rect x="1355" y="168" width="3" height="6" fill="#20a020"/>
<rect x="1347" y="188" width="14" height="11" fill="#fff" stroke="#2060e0"/><path d="M1349 192 H1359 M1349 195 H1359" stroke="#2060e0"/>
<rect x="1346" y="210" width="15" height="15" fill="#fff" stroke="#2060e0"/><text x="1347" y="222" font-size="9" fill="#2040c0">F10</text>
<rect x="1346" y="234" width="15" height="15" fill="#fff" stroke="#2060e0"/><rect x="1349" y="237" width="4" height="3" fill="#e0a020"/><rect x="1353" y="242" width="5" height="3" fill="#e0a020"/>
<rect x="1346" y="257" width="15" height="15" fill="#fff" stroke="#2060e0"/><rect x="1349" y="259" width="9" height="11" fill="#f07020"/>
<rect x="1346" y="280" width="15" height="15" fill="#fff" stroke="#2060e0"/><text x="1347" y="292" font-size="9" fill="#2040c0">F12</text>
<rect x="1346" y="303" width="15" height="15" fill="#fff" stroke="#2060e0" rx="3"/><text x="1348" y="315" font-size="9" font-style="italic" fill="#2040c0">fx</text>
<rect x="1346" y="324" width="15" height="15" fill="#fff" stroke="#2060e0"/><circle cx="1353.5" cy="331.5" r="4" fill="none" stroke="#2060e0"/>
<line x1="1344" y1="345" x2="1364" y2="345" stroke="#aaa"/>
<rect x="1346" y="354" width="15" height="14" fill="#fff" stroke="#2060e0"/><path d="M1348 360 L1351 358 L1354 361 L1357 358 L1359 360 M1348 364 L1351 362 L1354 365 L1357 362 L1359 364" stroke="#e02020" fill="none"/>
<text x="1344" y="390" font-size="11" font-weight="bold" fill="#2040c0">RSI</text>
<text x="1348" y="414" font-size="15" font-weight="bold" fill="#d02020">S</text>
<path d="M1354 424 L1358 429 L1355 429 L1355 432 L1358 432 L1358 429 L1363 432 L1358 436 L1358 433 L1355 433 L1355 436 L1358 436 L1354 441 L1350 436 L1353 436 L1353 433 L1350 433 L1350 436 L1345 432 L1350 428 L1350 431 L1353 431 L1353 429 L1350 429Z" fill="#2050c0"/>
<path d="M1347 462 L1349 456 L1359 446 L1362 449 L1352 459Z" fill="#e0a030" stroke="#805020" stroke-width="0.7"/>
<line x1="1344" y1="470" x2="1364" y2="470" stroke="#aaa"/>
<rect x="1346" y="478" width="15" height="15" fill="#fff" stroke="#2060e0"/><text x="1347" y="490" font-size="9" fill="#2040c0">F5</text>
<rect x="1346" y="501" width="15" height="15" fill="#e0ecff" stroke="#5080e0"/><circle cx="1353.5" cy="508.5" r="4" fill="none" stroke="#30a030" stroke-width="2"/>
</g>
<g font-size="12" fill="#203880" text-anchor="middle">
<text x="1354" y="537">1</text><text x="1354" y="560">5</text><text x="1354" y="583">15</text><text x="1354" y="606">30</text><text x="1354" y="629">60</text>
</g>
<rect x="1343.5" y="637.5" width="21" height="20" fill="#f8f8f8" stroke="#bbb"/>
<g font-size="14" fill="#203880" text-anchor="middle"><text x="1354" y="653">日</text><text x="1354" y="676">周</text><text x="1354" y="699">月</text></g>
</svg>
</body></html>
